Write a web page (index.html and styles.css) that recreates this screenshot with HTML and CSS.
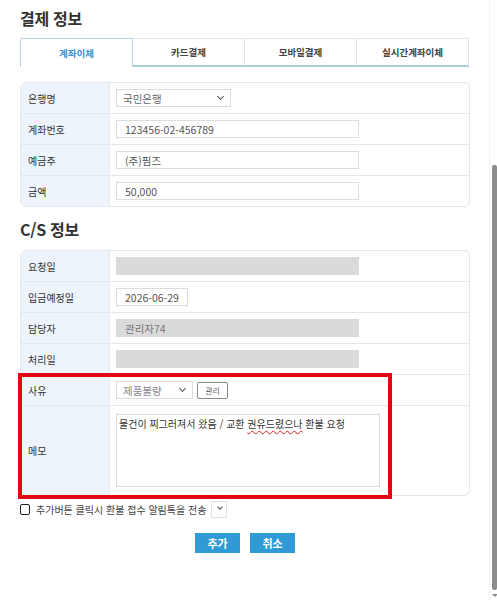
FILE: index.html
```html
<!DOCTYPE html>
<html lang="ko">
<head>
<meta charset="utf-8">
<link rel="stylesheet" href="styles.css">
</head>
<body>
<div class="page">
  <h2 class="title">결제 정보</h2>
  <div class="tabs">
    <div class="tab active">계좌이체</div>
    <div class="tab">카드결제</div>
    <div class="tab">모바일결제</div>
    <div class="tab">실시간계좌이체</div>
  </div>
  <div class="table t1">
    <div class="row"><div class="label">은행명</div><div class="cell"><div class="select sel-bank">국민은행<span class="chev"></span></div></div></div>
    <div class="row"><div class="label">계좌번호</div><div class="cell"><div class="input wide">123456-02-456789</div></div></div>
    <div class="row"><div class="label">예금주</div><div class="cell"><div class="input wide">(주)핌즈</div></div></div>
    <div class="row"><div class="label">금액</div><div class="cell"><div class="input wide">50,000</div></div></div>
  </div>

  <h2 class="title cs">C/S 정보</h2>
  <div class="table t2">
    <div class="row"><div class="label">요청일</div><div class="cell"><div class="input wide disabled"></div></div></div>
    <div class="row"><div class="label">입금예정일</div><div class="cell"><div class="input date">2026-06-29</div></div></div>
    <div class="row"><div class="label">담당자</div><div class="cell"><div class="input wide disabled">관리자74</div></div></div>
    <div class="row"><div class="label">처리일</div><div class="cell"><div class="input wide disabled"></div></div></div>
    <div class="row"><div class="label">사유</div><div class="cell"><div class="select sel-reason">제품불량<span class="chev"></span></div><div class="mini-btn">관리</div></div></div>
    <div class="row memo"><div class="label">메모</div><div class="cell"><div class="textarea">물건이 찌그러져서 왔음 / 교환 <span class="spell">권유드렸으나</span> 환불 요청</div></div></div>
    <div class="highlight"></div>
  </div>

  <div class="notify">
    <span class="check"></span>
    <span class="notify-text">추가버튼 클릭시 환불 접수 알림톡을 전송</span>
    <span class="mini-select"><span class="chev"></span></span>
  </div>

  <div class="actions">
    <div class="btn">추가</div>
    <div class="btn">취소</div>
  </div>
</div>
<div class="scrollbar"><div class="thumb"></div><div class="arrow"></div></div>
</body>
</html>
```

FILE: styles.css
```css
* { box-sizing: border-box; }
html, body { margin: 0; padding: 0; background: #fff; }
body {
  font-family: "Noto Sans CJK KR", "Noto Sans", sans-serif;
  color: #333;
  width: 497px;
  height: 600px;
  overflow: hidden;
  position: relative;
}
.page {
  width: 450px;
  margin-left: 20px;
  padding-top: 6px;
}
.title {
  margin: 0;
  font-size: 16px;
  font-weight: 700;
  line-height: 24px;
  color: #333;
  letter-spacing: -0.3px;
}
.title.cs { margin-top: 10px; }

.tabs {
  display: flex;
  margin-top: 8px;
  height: 29px;
  width: 449px;
}
.tab {
  flex: 1;
  display: flex;
  align-items: center;
  justify-content: center;
  font-size: 9.5px;
  font-weight: 700;
  color: #444;
  border: 1px solid #e2e6ea;
  border-left: none;
  border-bottom: 2px solid #a9cfd6;
}
.tab.active {
  color: #3b93d0;
  border: 1px solid #b8d3df;
  border-bottom: none;
  border-radius: 2px 2px 0 0;
  background: #fff;
}

.table {
  position: relative;
  margin-top: 15px;
  border: 1px solid #e4e7eb;
  border-radius: 6px;
  background: #fff;
}
.t2 { margin-top: 9px; }
.row {
  display: flex;
  height: 31px;
  border-top: 1px solid #e4e7eb;
}
.row:first-child { border-top: none; height: 30px; }
.label {
  width: 89px;
  flex: none;
  background: #eef4fb;
  border-right: 1px solid #e4e7eb;
  font-size: 10px;
  color: #333;
  display: flex;
  align-items: center;
  padding-left: 7px;
}
.row:first-child .label { border-top-left-radius: 6px; }
.row:last-child .label { border-bottom-left-radius: 6px; }
.cell {
  flex: 1;
  display: flex;
  align-items: center;
  padding-left: 6px;
  gap: 4px;
}
.input, .select {
  height: 18px;
  border: 1px solid #dcdcdc;
  font-size: 10.5px;
  color: #555;
  display: flex;
  align-items: center;
  padding-left: 8px;
  background: #fff;
}
.wide { width: 243px; }
.date { width: 72px; }
.disabled { background: #dadada; border-color: #dadada; color: #777; }
.select { position: relative; padding-left: 6px; color: #666; }
.sel-bank { width: 115px; }
.sel-reason { width: 77px; color: #888; }
.chev {
  position: absolute;
  right: 7px;
  top: 4px;
  width: 5px;
  height: 5px;
  border-right: 1.3px solid #555;
  border-bottom: 1.3px solid #555;
  transform: rotate(45deg);
}
.mini-btn {
  height: 17px;
  width: 31px;
  border: 1px solid #888;
  border-radius: 2px;
  font-size: 8px;
  color: #666;
  display: flex;
  align-items: center;
  justify-content: center;
  background: #fff;
}
.row.memo { height: 90px; }
.textarea {
  width: 264px;
  height: 73px;
  border: 1px solid #dcdcdc;
  font-size: 10px;
  color: #333;
  padding: 1px 2px;
  line-height: 15px;
  align-self: center;
}
.spell {
  text-decoration: underline wavy #e02020;
  text-decoration-thickness: 1px;
  text-underline-offset: 2px;
}
.highlight {
  position: absolute;
  left: -3px;
  top: 122px;
  width: 374px;
  height: 126px;
  border: 4px solid #e30613;
  pointer-events: none;
}

.notify {
  display: flex;
  align-items: center;
  margin-top: 3px;
  height: 20px;
  font-size: 10px;
  color: #444;
}
.check {
  width: 10px;
  height: 11px;
  border: 1.6px solid #222;
  border-radius: 2px;
  margin-right: 6px;
}
.mini-select {
  position: relative;
  width: 16px;
  height: 17px;
  border: 1px solid #e2e2e2;
  margin-left: 5px;
}
.mini-select .chev { right: 4px; top: 3px; width: 4px; height: 4px; }

.actions {
  display: flex;
  justify-content: center;
  gap: 10px;
  margin-top: 14px;
}
.btn {
  width: 45px;
  height: 20px;
  background: #2e9bd6;
  color: #fff;
  font-size: 11px;
  font-weight: 700;
  display: flex;
  align-items: center;
  justify-content: center;
}

.scrollbar {
  position: absolute;
  right: 0;
  top: 0;
  width: 8px;
  height: 600px;
  border-left: 1px solid #f0f0f0;
}
.thumb {
  position: absolute;
  left: 2px;
  top: 165px;
  width: 5px;
  height: 425px;
  background: #8d8d8d;
  border-radius: 2px;
}
.arrow {
  position: absolute;
  left: 2px;
  bottom: 3px;
  width: 0;
  height: 0;
  border-left: 3px solid transparent;
  border-right: 3px solid transparent;
  border-top: 3px solid #888;
}
```
